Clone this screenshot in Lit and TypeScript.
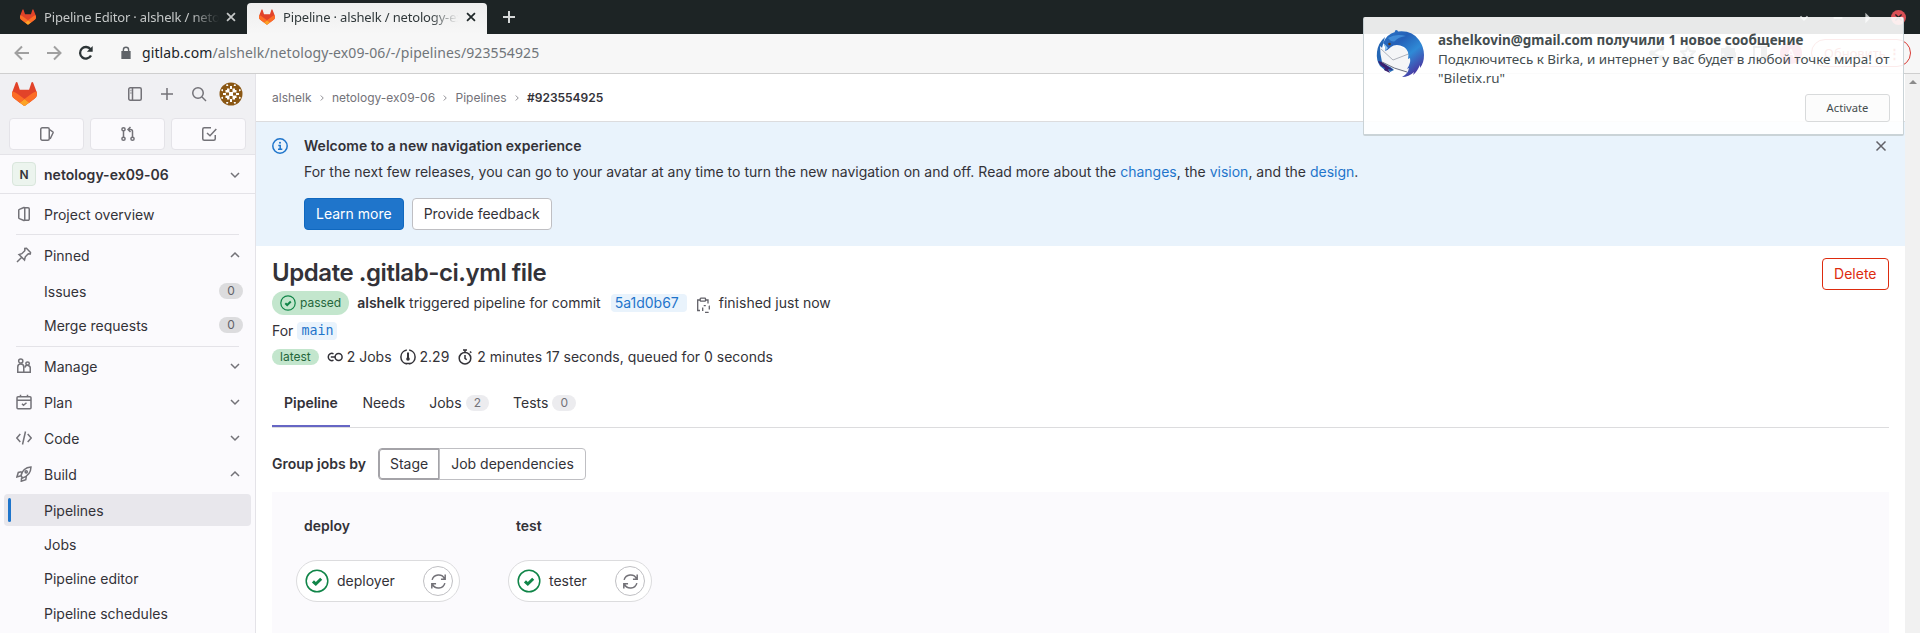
import { LitElement, html, css, svg } from "lit";
import { customElement } from "lit/decorators.js";

const tanuki = (cls: string) => html`<svg class=${cls} viewBox="0 0 25 24">
  <path fill="#E24329" d="m24.507 9.5-.034-.09L21.082.562a.896.896 0 0 0-1.694.091l-2.29 7.01H7.825L5.535.653a.898.898 0 0 0-1.694-.09L.451 9.411.416 9.5a6.297 6.297 0 0 0 2.09 7.278l.012.01.03.022 5.16 3.867 2.56 1.935 1.554 1.176a1.051 1.051 0 0 0 1.268 0l1.555-1.176 2.56-1.935 5.197-3.89.014-.01A6.297 6.297 0 0 0 24.507 9.5Z"/>
  <path fill="#FC6D26" d="m24.507 9.5-.034-.09a11.44 11.44 0 0 0-4.56 2.051l-7.447 5.632 4.742 3.584 5.197-3.89.014-.01A6.297 6.297 0 0 0 24.507 9.5Z"/>
  <path fill="#FCA326" d="m7.707 20.677 2.56 1.935 1.555 1.176a1.051 1.051 0 0 0 1.268 0l1.555-1.176 2.56-1.935-4.743-3.584-4.755 3.584Z"/>
  <path fill="#FC6D26" d="M5.01 11.461a11.43 11.43 0 0 0-4.56-2.05L.416 9.5a6.297 6.297 0 0 0 2.09 7.278l.012.01.03.022 5.16 3.867 4.745-3.584-7.444-5.632Z"/>
</svg>`;

const shapes: Record<string, unknown> = {
  close: svg`<path d="M3.5 3.5l9 9M12.5 3.5l-9 9"/>`,
  plus: svg`<path d="M8 2v12M2 8h12"/>`,
  back: svg`<path d="M15 8H2M8 1.500L1.500 8L8 14.500"/>`,
  forward: svg`<path d="M1 8h13M8 1.500L14.500 8L8 14.500"/>`,
  reload: svg`<path d="M13 10.500A5.800 5.800 0 1 1 12.500 4.300"/><path d="M14.700 1v5.800H8.900z" fill="currentColor" stroke="none"/>`,
  lock: svg`<path d="M3.500 6.500h9v7.500h-9z" fill="currentColor"/><path d="M5 7V4.500a3 3 0 0 1 6 0V7"/>`,
  sidebar: svg`<rect x="1.750" y="1.750" width="12.500" height="12.500" rx="1.500"/><path d="M5.500 2v12M3.500 4.500h.8M3.500 7h.8"/>`,
  search: svg`<circle cx="7" cy="7" r="5.250"/><path d="M11 11l4 4"/>`,
  issues: svg`<rect x="1.750" y="1.750" width="8.500" height="12.500" rx="1.500"/><path d="M10.500 3.500l3.300 2.300a.8.8 0 0 1 .3.900l-3 6.300"/>`,
  merge: svg`<circle cx="3.500" cy="3.250" r="1.600"/><circle cx="3.500" cy="12.750" r="1.600"/><circle cx="12.500" cy="12.750" r="1.600"/><path d="M3.500 5v6M12.500 11V5.500a2 2 0 0 0-2-2H8.500M10.500 1L8 3.500L10.500 6"/>`,
  todo: svg`<path d="M10 1.750H3.250a1.500 1.500 0 0 0-1.500 1.500v9.500a1.500 1.500 0 0 0 1.500 1.500h9.500a1.500 1.500 0 0 0 1.500-1.500V9"/><path d="M6 7l3 2.750L15.300 3"/>`,
  down: svg`<path d="M4 6l4 4l4-4"/>`,
  up: svg`<path d="M4 10l4-4l4 4"/>`,
  right: svg`<path d="M6 4l4 4l-4 4"/>`,
  project: svg`<path d="M8.750 1v14M8.500 1.200L3.400 3.400a1 1 0 0 0-.65.900v7.400a1 1 0 0 0 .65.900L8.500 14.800M8.750 1.750H12A1.250 1.250 0 0 1 13.250 3v10A1.250 1.250 0 0 1 12 14.250H8.750"/>`,
  pin: svg`<path d="M1 15l4.500-4.500M3 7.500l5.500 5.500l.8-3.200l3-3l2 .2l.2-1.500l-4-4.300l-1.700.3v2.200l-3 3z"/>`,
  users: svg`<circle cx="4.750" cy="3" r="2.100"/><path d="M7.800 14.250H1.750V9a3 3 0 0 1 6 0z"/><circle cx="11.600" cy="5.600" r="1.700"/><path d="M8 14.250h6.250V10.500a2.700 2.700 0 0 0-5.400-.8"/>`,
  calendar: svg`<rect x="1" y="2.750" width="14" height="12" rx="1"/><path d="M1 6.200h14M4.500.8v2M11.500.8v2M6 9.800l1.500 1.500l3-2.600"/>`,
  code: svg`<path d="M4.300 4L.8 8l3.500 4M11.700 4l3.500 4l-3.500 4M9.500 1.500l-3 13"/>`,
  rocket: svg`<path d="M5 9.500C6 5 9 1.500 15 1C14.800 7 11 10.500 6.500 12zM5.500 5.800L2.300 6.500L.9 11L5 9.800M10.300 10.500L9.800 13.700L5.300 15.200L5.600 11.800"/><circle cx="10.200" cy="5.800" r="1.100"/>`,
  info: svg`<circle cx="8" cy="8" r="7.200"/><path d="M6.300 7.400H8.200V11M6 11.200h4.300"/><circle cx="8" cy="4.700" r="1" fill="currentColor" stroke="none"/>`,
  check: svg`<circle cx="8" cy="8" r="7.200"/><path d="M5.300 8.200l1.900 1.800l3.600-3.500" stroke-width="2"/>`,
  retry: svg`<path d="M2 6.500A6.300 6.300 0 0 1 13.800 5.500M14 9.500A6.300 6.300 0 0 1 2.200 10.500M14.300 1.500v4.300H10.300M1.700 14.500v-4.300H5.700"/>`,
  copy: svg`<path d="M5 13.500H2.700V3h2.500M10.500 3H13v3.500"/><rect x="5.200" y="1.200" width="5.300" height="3" rx=".6"/><rect x="7.700" y="8.700" width="6.600" height="6.600" rx="1" stroke-dasharray="3.600 3" stroke-dashoffset="1.500"/>`,
  link: svg`<circle cx="11.600" cy="8" r="3.500"/><path d="M6.500 4.800A3.600 3.600 0 1 0 6.500 11.200M3.800 8H8"/>`,
  gauge: svg`<path d="M9.200 1A7.100 7.100 0 0 1 9.200 15M6.800 15A7.100 7.100 0 0 1 6.800 1M5.500 14.600h5"/><path d="M8 3.500v7" stroke-width="2"/><circle cx="8" cy="10" r="1.800" fill="currentColor" stroke="none"/>`,
  timer: svg`<circle cx="8" cy="9.200" r="5.800"/><path d="M6 .9h4M8 1v2M8 6v3.300l1.700 1.500M13 2.500l1.300 1.300"/>`,
  share: svg`<circle cx="3" cy="8" r="1.800" fill="currentColor"/><circle cx="12.500" cy="3" r="1.800" fill="currentColor"/><circle cx="12.500" cy="13" r="1.800" fill="currentColor"/><path d="M12.500 3L3 8l9.500 5"/>`,
  star: svg`<path d="M8 1.500l2 4.500l4.800.5l-3.600 3.200l1 4.800L8 12l-4.200 2.500l1-4.800L1.200 6.500L6 6z"/>`,
  puzzle: svg`<path d="M2 4h4a2 2 0 1 1 4 0h4v4a2 2 0 1 1 0 4v3H2v-4a2 2 0 1 0 0-3z" fill="currentColor"/>`,
  panel: svg`<rect x="2" y="2" width="12" height="12"/><path d="M10 2h4v12h-4z" fill="currentColor"/>`,
  min: svg`<path d="M3 8h10"/>`,
  max: svg`<path d="M5 2l6 6l-6 6z" fill="currentColor" stroke="none"/>`,
};
const icon = (name: string, cls = "") => html`<svg class="i ${cls}" viewBox="0 0 16 16">${shapes[name]}</svg>`;

const thunderbird = html`<svg class="bird" viewBox="0 0 48 48">
  <defs>
    <linearGradient id="b" x1="0" y1="0" x2=".7" y2="1"><stop offset="0" stop-color="#2a76c6"/><stop offset=".35" stop-color="#2560b8"/><stop offset=".65" stop-color="#2f8ad6"/><stop offset="1" stop-color="#4a35a0"/></linearGradient>
  </defs>
  <path fill="#2567b5" d="M9 7Q2 13 1 22Q0 30 4 36L10 41L9 36L14 42L18 40L8 30L6 18Z"/>
  <path fill="#3a2070" d="M2 31Q4 36 9 38L8 40L14 43L12 39L17 40L6 32Z"/>
  <path fill="#f4f5f7" d="M4 16Q7 20 11 19L20 15L34 21L36 36L31 43Q17 40 6 32Q4 24 4 16Z"/>
  <path fill="none" stroke="#aeb2bb" d="M5 19L17 30L35 23"/>
  <path fill="none" stroke="#6a6f80" d="M6 32Q18 39 31 42"/>
  <path fill="url(#b)" d="M7 13Q11 4 19 2Q18 1 20 0Q22 0 22 1.500Q36 0 43 10Q48 17 48 25Q48 33 44 38L44 35Q41 42 37 45L38 42Q33 47 26 47Q32 44 33 38L31 39Q35 33 34 28L32 29Q34 21 28 17Q20 13 15 17Q12 20 9 21Q10 16 7 13Z"/>
  <path fill="#4b9be2" opacity=".7" d="M12 8Q20 3 30 6Q22 7 19 11Q16 13 12 8Z"/>
  <path fill="#8fc6ee" d="M7 13Q10 15 12 18Q10 20 9 21Q10 17 7 13Z"/>
  <circle cx="13.500" cy="14" r="1.300" fill="#5b3a1a"/>
</svg>`;

const identicon = html`<svg class="avatar" viewBox="0 0 24 24">
  <circle cx="12" cy="12" r="11.500" fill="#8a5714"/>
  <g fill="#fff"><path d="M8 6.500h2.500v3.500h3V6.500H16V8h1.500v2.500H14v3h3.500V16H16v1.500h-2.500V14h-3v3.500H8V16H6.500v-2.500H10v-3H6.500V8H8z"/>
  <path d="M11 4h2v3h-2zM11 17h2v3h-2zM4 11h3v2H4zM17 11h3v2h-3z"/>
  <path d="M8 1.500l1.500 2.500H7zM16 1.500l1 2.500h-2.500zM1.500 8L4 9.500V7zM1.500 16L4 17v-2.500zM22.500 8L20 9.500V7zM22.500 16L20 17v-2.500zM8 22.500L9.500 20H7zM16 22.500l1-2.500h-2.500z"/></g>
</svg>`;

@customElement("browser-chrome")
class BrowserChrome extends LitElement {
  static styles = css`
    :host { display: block; font-family: "Noto Sans", sans-serif; }
    .i { fill: none; stroke: currentColor; stroke-width: 2; width: 16px; height: 16px; flex: none; }
    .strip { height: 34px; background: #1d2425; display: flex; align-items: flex-end; }
    .tab { height: 31px; box-sizing: border-box; display: flex; align-items: center; padding: 0 9px 3px 20px; width: 247px; color: #c5c8c8; font-size: 13px; letter-spacing: -.16px; }
    .tab.on { width: 240px; padding-left: 12px; background: linear-gradient(#eee, #f7f7f7); border-radius: 4px 4px 0 0; color: #30383a; }
    .fox { width: 16px; height: 16px; margin-right: 8px; flex: none; }
    .label { width: 175px; overflow: hidden; white-space: nowrap; -webkit-mask-image: linear-gradient(90deg, #000 84%, transparent); mask-image: linear-gradient(90deg, #000 84%, transparent); }
    .x { width: 14px; height: 14px; margin-left: auto; }
    .tab.on .x { color: #202829; }
    .new { color: #d5d8d8; margin: 0 0 9px 14px; }
    .win { display: flex; align-items: center; gap: 16px; margin: 0 14px 9px auto; color: #b9bdbd; }
    .win .i { width: 14px; height: 14px; }
    .win .dn { margin-right: 4px; }
    .kill { width: 15px; height: 15px; border-radius: 8px; background: #d94f55; color: #1d2425; display: grid; place-items: center; }
    .kill .i { width: 11px; height: 11px; }
    .bar { height: 40px; box-sizing: border-box; background: #f7f7f7; border-bottom: 1px solid #cfcfcf; display: flex; align-items: center; padding: 0 9px 1px 14px; }
    .nav { color: #a0a0a0; margin-right: 16px; }
    .nav.r { color: #2c3436; margin-right: 25px; stroke-width: 2.3; }
    .lock { width: 14px; height: 14px; color: #5f6368; margin-right: 9px; stroke-width: 1.6; }
    .url { font-size: 14px; line-height: 18px; letter-spacing: .11px; color: #70757a; margin-bottom: 1px; }
    .host { color: #202427; }
    .tools { margin-left: auto; display: flex; align-items: center; color: #60666a; }
    .tools .share { margin-right: 15px; }
    .tools .star { margin-right: 24px; }
    .tools .puzzle { margin-right: 16px; }
    .tools .panel { margin-right: 12px; }
    .me { width: 22px; height: 22px; border-radius: 11px; background: #e0407a; color: #fff; font-size: 13px; display: grid; place-items: center; }
    .upd { margin-left: 9px; width: 100px; height: 28px; box-sizing: border-box; border: 1px solid #d93a34; border-radius: 14px; color: #d93a34; font-size: 13px; display: flex; align-items: center; justify-content: space-between; padding: 0 9px 0 12px; }
  `;
  render() {
    return html`
      <div class="strip">
        <div class="tab">${tanuki("fox")}<span class="label">Pipeline Editor · alshelk / netology</span>${icon("close", "x")}</div>
        <div class="tab on">${tanuki("fox")}<span class="label">Pipeline · alshelk / netology-ex09-06</span>${icon("close", "x")}</div>
        ${icon("plus", "new")}
        <div class="win">${icon("down", "dn")}${icon("min")}${icon("max")}<span class="kill">${icon("close")}</span></div>
      </div>
      <div class="bar">
        ${icon("back", "nav")}${icon("forward", "nav")}${icon("reload", "nav r")}${icon("lock", "lock")}
        <span class="url"><span class="host">gitlab.com</span>/alshelk/netology-ex09-06/-/pipelines/923554925</span>
        <div class="tools">${icon("share", "share")}${icon("star", "star")}${icon("puzzle", "puzzle")}${icon("panel", "panel")}<span class="me">A</span>
          <span class="upd"><span>Обновить</span><b>⋮</b></span></div>
      </div>`;
  }
}

@customElement("side-nav")
class SideNav extends LitElement {
  static styles = css`
    :host { display: flex; flex-direction: column; box-sizing: border-box; width: 256px; flex: none; background: #fbfafd; border-right: 1px solid #e4e3e8; overflow: hidden; color: #333238; font-size: 14px; }
    .i { fill: none; stroke: #737278; stroke-width: 1.5; width: 16px; height: 16px; flex: none; }
    .head { background: #f0f0f3; border-bottom: 1px solid #e4e3e8; height: 81px; box-sizing: border-box; flex: none; }
    .top { display: flex; align-items: center; height: 40px; padding: 0 12px; gap: 16px; }
    .logo { width: 25px; height: 24px; margin-right: auto; }
    .avatar { width: 24px; height: 24px; margin-left: -4px; }
    .trio { display: flex; gap: 6px; padding: 4px 9px; }
    .trio div { flex: 1; height: 32px; box-sizing: border-box; background: #fbfafd; border: 1px solid #e4e3e8; border-radius: 4px; display: grid; place-items: center; }
    .ctx { height: 39px; box-sizing: border-box; border-bottom: 1px solid #e4e3e8; display: flex; align-items: center; padding: 1px 12px 0; font-weight: 600; letter-spacing: .04px; margin-bottom: 4px; flex: none; }
    .n { width: 24px; height: 24px; box-sizing: border-box; border: 1px solid #d9e6dc; background: #ecf4ee; border-radius: 4px; display: grid; place-items: center; margin: 0 8px 1px 0; font-size: 12px; }
    .row { height: 32px; margin-bottom: 4px; display: flex; align-items: center; padding: 0 12px 0 16px; flex: none; }
    .row > span { margin-left: 12px; }
    .sub { height: 32px; margin: 0 4px 2px; display: flex; align-items: center; padding: 0 8px 0 40px; flex: none; border-radius: 4px; }
    .sel { background: #e8e7ec; padding-left: 4px; }
    .sel::before { content: ""; width: 3px; height: 24px; border-radius: 2px; background: #1f75cb; margin-right: 33px; }
    .chev { margin-left: auto; width: 16px; height: 16px; }
    .cnt { margin: 0 0 1px auto; background: #dcdcde; border-radius: 8px; width: 24px; height: 16px; line-height: 16px; text-align: center; font-size: 12px; color: #626168; }
    .hr { height: 1px; background: #e4e3e8; margin: 0 16px 4px; flex: none; }
    .hr.low { margin: 3px 16px 3px; }
    .last { margin-top: 1px; }
  `;
  row(name: string, label: string, chev: string) {
    return html`<div class="row">${icon(name)}<span>${label}</span>${chev ? icon(chev, "chev") : ""}</div>`;
  }
  sub(label: string, count = "", cls = "") {
    return html`<div class="sub ${cls}">${label}${count ? html`<span class="cnt">${count}</span>` : ""}</div>`;
  }
  render() {
    return html`
      <div class="head">
        <div class="top">${tanuki("logo")}${icon("sidebar")}${icon("plus")}${icon("search")}${identicon}</div>
        <div class="trio"><div>${icon("issues")}</div><div>${icon("merge")}</div><div>${icon("todo")}</div></div>
      </div>
      <div class="ctx"><span class="n">N</span>netology-ex09-06${icon("down", "chev")}</div>
      ${this.row("project", "Project overview", "")}
      <div class="hr"></div>
      ${this.row("pin", "Pinned", "up")}${this.sub("Issues", "0")}${this.sub("Merge requests", "0")}
      <div class="hr low"></div>
      ${this.row("users", "Manage", "down")}${this.row("calendar", "Plan", "down")}${this.row("code", "Code", "down")}${this.row("rocket", "Build", "up")}
      ${this.sub("Pipelines", "", "sel")}${this.sub("Jobs")}${this.sub("Pipeline editor")}${this.sub("Pipeline schedules", "", "last")}`;
  }
}

@customElement("pipeline-page")
class PipelinePage extends LitElement {
  static styles = css`
    :host { display: block; flex: 1; min-width: 0; color: #333238; font-size: 14px; line-height: 20px; }
    .i { fill: none; stroke: currentColor; stroke-width: 1.5; width: 16px; height: 16px; flex: none; }
    .crumbs { height: 48px; box-sizing: border-box; border-bottom: 1px solid #dcdcde; display: flex; align-items: center; padding-left: 16px; font-size: 12px; color: #737278; }
    .crumbs .i { width: 10px; height: 10px; margin: 0 5.2px; color: #89888d; }
    .crumbs b { color: #333238; font-weight: 600; }
    .ban { background: #e9f3fc; height: 124px; box-sizing: border-box; padding: 14px 16px 0 16px; display: flex; }
    .info { color: #1f75cb; margin: 2px 16px 0 0; }
    .dismiss { margin: 2px 0 0 auto; color: #626168; }
    .ban p { margin: 6px 0 16px; }
    .ban b, .meta b, .gj b { font-weight: 600; }
    .ban b { letter-spacing: .02px; }
    .lk { color: #1f75cb; }
    .btns { display: flex; gap: 8px; }
    .btn { height: 32px; box-sizing: border-box; border: 1px solid #bfbfc3; border-radius: 4px; background: #fff; padding: 5px 11px; white-space: nowrap; }
    .pri { background: #1f75cb; border-color: #1068bf; color: #fff; }
    .del { border-color: #dd2b0e; color: #dd2b0e; padding: 5px 11.500px; }
    .body { padding: 12px 16px 0; }
    .head { display: flex; justify-content: space-between; height: 32px; }
    h1 { font-size: 24px; line-height: 28px; font-weight: 600; margin: 1px 0 0; letter-spacing: -.44px; }
    .meta { display: flex; align-items: center; height: 26px; white-space: pre; }
    .meta.r2 { height: 28px; box-sizing: border-box; padding-top: 2px; }
    .passed { height: 24px; display: flex; align-items: center; gap: 4px; background: #c3e6cd; color: #24663b; border-radius: 12px; padding: 0 8px; margin-right: 8px; font-size: 12px; }
    .passed .i { color: #108548; stroke-width: 1.2; }
    .sha { background: #e9f3fc; color: #1f75cb; border-radius: 4px; line-height: 18px; padding: 0 8px 0 4px; margin: 0 8px 0 10px; }
    .copy { color: #626168; margin: 4px 8px 0 0; stroke-width: 1.3; }
    .main { font-family: "DejaVu Sans Mono", monospace; font-size: 13.300px; background: #e9f3fc; color: #1f75cb; border-radius: 4px; padding: 0 4px; line-height: 18px; margin-left: 4px; }
    .latest { background: #c3e6cd; color: #24663b; border-radius: 8px; font-size: 12px; line-height: 16px; padding: 0 8px; margin-right: 8px; }
    .stat { margin-right: 4px; }
    .gap { margin-right: 8px; }
    .tabs { display: flex; height: 49px; box-sizing: border-box; margin-top: 9px; border-bottom: 1px solid #dcdcde; }
    .t { padding: 14px 12px 0; display: flex; gap: 4px; }
    .t.on { padding: 14px 12.500px 0 12px; font-weight: 600; box-shadow: inset 0 -2px #6666c4; }
    .c { background: #ececef; color: #737278; border-radius: 8px; width: 23.500px; height: 16px; line-height: 16px; text-align: center; font-size: 12px; margin-top: 2px; }
    .gj { display: flex; align-items: center; margin: 20px 0 12px; }
    .stage { margin-left: 12px; border-radius: 4px 0 0 4px; border: 1px solid #a4a3a8; box-shadow: inset 0 0 0 1px #a4a3a8; }
    .dep { margin-left: -1px; border-radius: 0 4px 4px 0; }
    .graph { background: #fbfafd; height: 141px; display: flex; gap: 48px; padding-left: 24px; }
    .col h4 { margin: 24px 0 24px 8px; font-size: 14px; line-height: 20px; font-weight: 600; }
    .job { height: 42px; box-sizing: border-box; border: 1px solid #dcdcde; border-radius: 21px; background: #fff; display: flex; align-items: center; padding: 0 6px 0 8px; }
    .ok { width: 24px; height: 24px; color: #108548; margin-right: 8px; stroke-width: 1; }
    .rt { margin-left: auto; width: 30px; height: 30px; box-sizing: border-box; border: 1px solid #bfbfc3; border-radius: 15px; display: grid; place-items: center; color: #737278; }
    .rt .i { width: 17px; height: 17px; stroke-width: 1.4; }
    .w1 { width: 164px; } .w2 { width: 144px; }
  `;
  col(stage: string, job: string, w: string) {
    return html`<div class="col"><h4>${stage}</h4><div class="job ${w}">${icon("check", "ok")}<span>${job}</span><span class="rt">${icon("retry")}</span></div></div>`;
  }
  render() {
    return html`
      <div class="crumbs">alshelk${icon("right")}netology-ex09-06${icon("right")}Pipelines${icon("right")}<b>#923554925</b></div>
      <div class="ban">${icon("info", "info")}
        <div><b>Welcome to a new navigation experience</b>
          <p>For the next few releases, you can go to your avatar at any time to turn the new navigation on and off. Read more about the <span class="lk">changes</span>, the <span class="lk">vision</span>, and the <span class="lk">design</span>.</p>
          <div class="btns"><span class="btn pri">Learn more</span><span class="btn">Provide feedback</span></div></div>
        ${icon("close", "dismiss")}
      </div>
      <div class="body">
        <div class="head"><h1>Update .gitlab-ci.yml file</h1><span class="btn del">Delete</span></div>
        <div class="meta"><span class="passed">${icon("check")}passed</span><b>alshelk</b> triggered pipeline for commit<span class="sha">5a1d0b67</span>${icon("copy", "copy")}finished just now</div>
        <div class="meta r2">For<span class="main">main</span></div>
        <div class="meta"><span class="latest">latest</span>${icon("link", "stat")}<span class="gap">2 Jobs</span>${icon("gauge", "stat")}<span class="gap">2.29</span>${icon("timer", "stat")}2 minutes 17 seconds, queued for 0 seconds</div>
        <div class="tabs"><div class="t on">Pipeline</div><div class="t">Needs</div><div class="t">Jobs<span class="c">2</span></div><div class="t">Tests<span class="c">0</span></div></div>
        <div class="gj"><b>Group jobs by</b><span class="btn stage">Stage</span><span class="btn dep">Job dependencies</span></div>
        <div class="graph">${this.col("deploy", "deployer", "w1")}${this.col("test", "tester", "w2")}</div>
      </div>`;
  }
}

@customElement("app-root")
class AppRoot extends LitElement {
  static styles = css`
    :host { display: flex; flex-direction: column; position: relative; width: 1920px; height: 633px; overflow: hidden; background: #fff; font-family: Inter, "Noto Sans", sans-serif; }
    .page { display: flex; flex: 1; min-height: 0; }
    .scroll { width: 15px; background: #f1f1f1; display: flex; justify-content: center; }
    .scroll::before { content: ""; height: 0; margin-top: 6px; border: 4px solid transparent; border-top: 0; border-bottom: 4px solid #8b8b8b; }
    .note { position: absolute; left: 1363px; top: 17px; width: 541px; height: 119px; box-sizing: border-box; border: 1px solid rgba(180, 192, 198, .7); border-top-color: transparent; border-bottom-width: 2px; border-radius: 2px; background: rgba(255, 255, 255, .9); display: flex; padding: 12px 13px 12px 12px; font-family: "Noto Sans", sans-serif; font-size: 13.450px; line-height: 19.500px; color: #444d4f; }
    .bird { width: 48px; height: 48px; flex: none; margin-right: 14px; }
    .txt { flex: 1; display: flex; flex-direction: column; white-space: nowrap; }
    .txt b { padding-top: 1px; margin-bottom: -1px; letter-spacing: .03px; }
    .act { align-self: flex-end; margin-top: auto; width: 85px; height: 28px; box-sizing: border-box; border: 1px solid #d8dadb; border-radius: 3px; background: #fcfcfc; text-align: center; font-size: 11.200px; line-height: 26px; }
  `;
  render() {
    return html`
      <browser-chrome></browser-chrome>
      <div class="page"><side-nav></side-nav><pipeline-page></pipeline-page><div class="scroll"></div></div>
      <div class="note">${thunderbird}<div class="txt"><b>ashelkovin@gmail.com получили 1 новое сообщение</b><span>Подключитесь к Birka, и интернет у вас будет в любой точке мира! от</span><span>"Biletix.ru"</span><span class="act">Activate</span></div></div>`;
  }
}
